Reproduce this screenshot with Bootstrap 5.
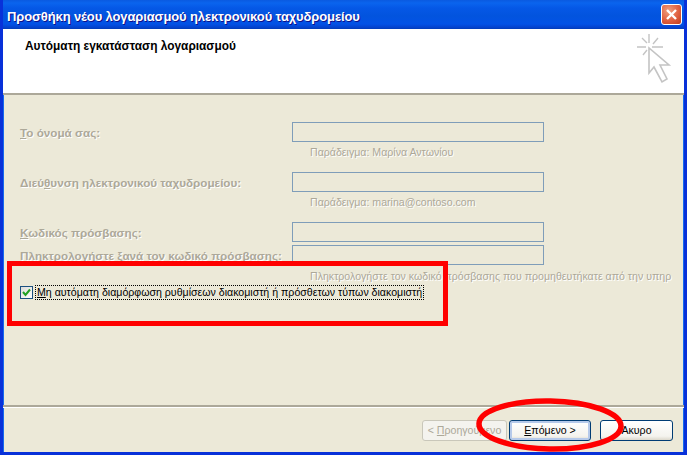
<!DOCTYPE html>
<html lang="el">
<head>
<meta charset="utf-8">
<title>Προσθήκη νέου λογαριασμού</title>
<link href="https://cdn.jsdelivr.net/npm/bootstrap@5.3.0/dist/css/bootstrap.min.css" rel="stylesheet">
<style>
html,body{height:455px;overflow:hidden;background:#ece9d8}
body{font-family:"Liberation Sans",Arial,sans-serif;font-size:10.6px;line-height:13px;color:#000}
.xp-win{position:relative;width:687px;height:455px;background:#ece9d8;border-left:3px solid #0831d9;border-right:3px solid #0831d9;border-bottom:3px solid #0831d9;box-shadow:inset 1px 0 #166aee,inset -1px 0 #166aee;overflow:hidden}
.xp-title{height:29px;margin:0 -3px;padding:0 5px 0 7px;background:linear-gradient(180deg,#0a5ae0 0,#0a64ee 3px,#0558e6 8px,#0254de 16px,#0252e6 24px,#0440c8 28px,#003cb4 29px);color:#fff;font-size:13px;font-weight:700;letter-spacing:-.12px;text-shadow:1px 1px #0f1089}
.xp-title-txt{padding-top:3px}
.xp-close{width:21px;height:21px;padding:0;border:1px solid #fff;border-radius:3px;background:radial-gradient(circle at 35% 30%,#f0a080,#e06040 55%,#c03c1c)}
.xp-head{height:66px;padding:11px 12px 0 22px;background:#fff;border-bottom:2px solid #aca899;font-size:11.9px;font-weight:700}
.xp-spark{margin-top:-10px;flex:none}
.xp-form{height:310px;padding:27px 0 0 17px;color:#aca899}
.xp-row{height:20px}
.xp-lab{width:272px;font-size:11.7px;font-weight:700;text-shadow:1px 1px #fff}
.xp-field{width:252px;height:20px;border:1px solid #7f9db9;background:#ece9d8;border-radius:0;padding:0;box-shadow:none}
.xp-field:disabled{background:#ece9d8;opacity:1}
.xp-hint{height:30px;padding:4px 0 0 290px;white-space:nowrap;text-shadow:1px 1px #fff}
.xp-gap{height:3px}
.xp-hint-last{height:20px;padding-top:5px}
.xp-check{color:#000;height:15px}
.xp-box{width:13px;height:13px;border:1px solid #1c5180;background:linear-gradient(135deg,#dcdcd7,#fff);flex:none}
.xp-cap{border:1px dotted #000;padding:0 1px;margin-left:2px;white-space:nowrap}
.xp-foot{height:47px;border-top:2px solid #aca899;padding:13px 11px 0 0;box-shadow:inset 0 1px #fff}
.xp-btn{height:21px;font-size:10.6px;line-height:13px;padding:0;border:1px solid #003c74;border-radius:3px;color:#000;background:linear-gradient(180deg,#fff,#f4f3ee 80%,#dcd8cc)}
.xp-btn:disabled{opacity:1;color:#aca899;border-color:#c9c7ba;background:#f4f3ee}
.xp-w1{width:85px}
.xp-w2{width:82px;margin-left:2px;box-shadow:inset 0 0 0 2px #b5c9ea}
.xp-w3{width:73px;margin-left:9px}
.xp-rect{position:absolute;left:4px;top:261px;width:441px;height:65px;border:5px solid #f00}
.xp-oval{position:absolute;left:471px;top:396px;width:152px;height:59px;pointer-events:none}
</style>
</head>
<body>
<div class="xp-win">
  <div class="xp-title d-flex align-items-center justify-content-between">
    <span class="xp-title-txt">Προσθήκη νέου λογαριασμού ηλεκτρονικού ταχυδρομείου</span>
    <button type="button" class="xp-close d-flex align-items-center justify-content-center" aria-label="Κλείσιμο">
      <svg width="13" height="13" viewBox="0 0 13 13"><path d="M2 2l9 9M11 2l-9 9" stroke="#fff" stroke-width="2.4" fill="none"/></svg>
    </button>
  </div>
  <div class="xp-head d-flex justify-content-between">
    <div>Αυτόματη εγκατάσταση λογαριασμού</div>
    <svg class="xp-spark" width="40" height="55" viewBox="632 30 40 55" fill="none">
      <path d="M649 34v9M642 38l5 5M658 38l-5 6M637 47h9M652 47h11M643 55l4-5" stroke="#c4c4c4" stroke-width="1.4"/>
      <path d="M649 48v25l5-6 8 15 5-3-7-14h9z" fill="#fff" stroke="#c4c4c4" stroke-width="1.6"/>
    </svg>
  </div>
  <div class="xp-form">
    <div class="xp-row d-flex align-items-center"><div class="xp-lab"><u>Τ</u>ο όνομά σας:</div><input class="form-control xp-field" disabled aria-label="Όνομα"></div>
    <div class="xp-hint">Παράδειγμα: Μαρίνα Αντωνίου</div>
    <div class="xp-row d-flex align-items-center"><div class="xp-lab">Διεύ<u>θ</u>υνση ηλεκτρονικού ταχυδρομείου:</div><input class="form-control xp-field" disabled aria-label="Διεύθυνση"></div>
    <div class="xp-hint">Παράδειγμα: marina@contoso.com</div>
    <div class="xp-row d-flex align-items-center"><div class="xp-lab"><u>Κ</u>ωδικός πρόσβασης:</div><input class="form-control xp-field" disabled aria-label="Κωδικός"></div>
    <div class="xp-gap"></div>
    <div class="xp-row d-flex align-items-center"><div class="xp-lab">Πληκτρολογήστε ξανά τον κωδικό πρόσβασης:</div><input class="form-control xp-field" disabled aria-label="Επιβεβαίωση"></div>
    <div class="xp-hint xp-hint-last">Πληκτρολογήστε τον κωδικό πρόσβασης που προμηθευτήκατε από την υπηρ</div>
    <div class="xp-check d-flex align-items-center">
      <span class="xp-box d-flex align-items-center justify-content-center"><svg width="9" height="9" viewBox="0 0 9 9"><path d="M1 4l2.5 3L8 1.5" stroke="#21a121" stroke-width="2" fill="none"/></svg></span>
      <span class="xp-cap"><u>Μ</u>η αυτόματη διαμόρφωση ρυθμίσεων διακομιστή ή πρόσθετων τύπων διακομιστή</span>
    </div>
  </div>
  <div class="xp-foot d-flex justify-content-end align-items-start">
    <button type="button" class="btn xp-btn xp-w1" disabled>&lt; <u>Π</u>ροηγούμενο</button>
    <button type="button" class="btn xp-btn xp-w2"><u>Ε</u>πόμενο &gt;</button>
    <button type="button" class="btn xp-btn xp-w3">Άκυρο</button>
  </div>
  <div class="xp-rect"></div>
  <svg class="xp-oval" viewBox="0 0 152 59" fill="none"><ellipse cx="76" cy="29" rx="71" ry="24" stroke="#f00" stroke-width="5.5" transform="rotate(1 76 29)"/></svg>
</div>
</body>
</html>
